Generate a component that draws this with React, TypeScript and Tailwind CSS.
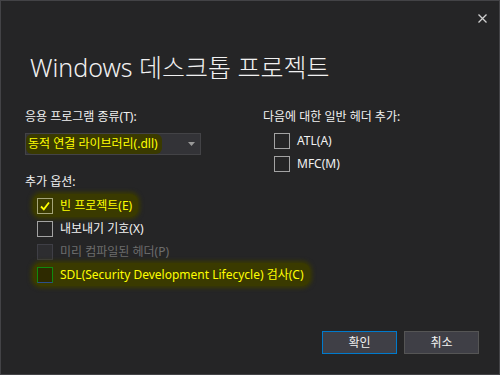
import { useState } from "react";

// Windows 데스크톱 프로젝트 dialog (Visual Studio dark theme)

type Opt = {
  label: string;
  checked?: boolean;
  disabled?: boolean;
  highlight?: boolean;
  sdl?: boolean;
};

const OPTIONS: Opt[] = [
  { label: "빈 프로젝트(E)", checked: true, highlight: true },
  { label: "내보내기 기호(X)" },
  { label: "미리 컴파일된 헤더(P)", disabled: true },
  { label: "SDL(Security Development Lifecycle) 검사(C)", highlight: true, sdl: true },
];

function Check({ checked, disabled, highlight, sdl }: Omit<Opt, "label">) {
  let cls = "border-[#a3a3a3] bg-transparent";
  if (disabled) cls = "border-[#3f3f46] bg-[#2d2d30]";
  if (highlight) cls = "border-[#a6a67a] bg-[#3a3a00]";
  if (sdl) cls = "border-[#0f8a0f] border-b-[#2c4f8c] bg-[#2e2a00]";
  return (
    <span className={`flex h-[16px] w-[16px] shrink-0 items-center justify-center border ${cls}`}>
      {checked && (
        <svg width="12" height="12" viewBox="0 0 12 12">
          <path d="M2 6.5 L4.8 9.3 L10 2.5" fill="none" stroke="#ffff00" strokeWidth="1.8" />
        </svg>
      )}
    </span>
  );
}

function Row({ opt }: { opt: Opt }) {
  const text = opt.disabled
    ? "text-[#6d6d6d]"
    : opt.highlight
    ? "text-[#ffff00]"
    : "text-[#f1f1f1]";
  return (
    <div
      className={`flex h-[23px] w-fit items-center gap-[7px] whitespace-nowrap rounded-[8px] ${
        opt.highlight ? "-ml-[4px] bg-[#3a3a00] pl-[4px] pr-[6px] shadow-[0_0_4px_2px_#3a3a00]" : ""
      }`}
    >
      <Check {...opt} />
      <span className={`text-[12px] ${text}`}>{opt.label}</span>
    </div>
  );
}

export default function App() {
  const [atl, setAtl] = useState(false);
  const [mfc, setMfc] = useState(false);

  return (
    <div className="relative flex h-[375px] w-[500px] flex-col border border-[#434346] bg-[#252526] font-['Noto_Sans','Noto_Sans_CJK_KR',sans-serif] text-[#f1f1f1]">
      <button type="button" className="absolute right-[11px] top-[12px] p-px">
        <svg width="9" height="9" viewBox="0 0 9 9">
          <path d="M0.5 0.5 L8.5 8.5 M8.5 0.5 L0.5 8.5" stroke="#d0d0d0" strokeWidth="1.3" />
        </svg>
      </button>

      <h1 className="ml-[29px] mt-[50px] text-[25px] font-light leading-[32px] text-[#f1f1f1]">
        Windows 데스크톱 프로젝트
      </h1>

      <div className="mt-[25px] flex">
        <div className="ml-[24px] w-[238px] shrink-0">
          <p className="text-[12px] leading-[18px]">응용 프로그램 종류(T):</p>
          <div className="mt-[7px] flex h-[22px] w-[176px] items-center justify-between border border-[#434346] bg-[#333337] pr-[5px]">
            <span className="flex h-full items-center rounded-[6px] bg-[#3a3a00] pl-[2px] pr-[4px] text-[12px] text-[#ffff00]">
              동적 연결 라이브러리(.dll)
            </span>
            <svg width="7" height="4" viewBox="0 0 7 4">
              <path d="M0 0 L7 0 L3.5 4 Z" fill="#999999" />
            </svg>
          </div>
          <p className="mt-[18px] text-[12px] leading-[18px]">추가 옵션:</p>
          <div className="ml-[12px] mt-[3px] flex flex-col">
            {OPTIONS.map((o) => (
              <Row key={o.label} opt={o} />
            ))}
          </div>
        </div>

        <div>
          <p className="text-[12px] leading-[18px]">다음에 대한 일반 헤더 추가:</p>
          <div className="ml-[11px] mt-[3px] flex flex-col">
            <button type="button" onClick={() => setAtl(!atl)} className="flex h-[23px] items-center gap-[7px]">
              <Check checked={atl} />
              <span className="text-[12px]">ATL(A)</span>
            </button>
            <button type="button" onClick={() => setMfc(!mfc)} className="flex h-[23px] items-center gap-[7px]">
              <Check checked={mfc} />
              <span className="text-[12px]">MFC(M)</span>
            </button>
          </div>
        </div>
      </div>

      <div className="mb-[20px] mr-[20px] mt-auto flex justify-end gap-[7px]">
        <button type="button" className="h-[23px] w-[75px] border border-[#007acc] bg-[#3f3f46] text-[12px] text-[#f1f1f1]">
          확인
        </button>
        <button type="button" className="h-[23px] w-[75px] border border-[#555555] bg-[#3f3f46] text-[12px] text-[#f1f1f1]">
          취소
        </button>
      </div>
    </div>
  );
}
